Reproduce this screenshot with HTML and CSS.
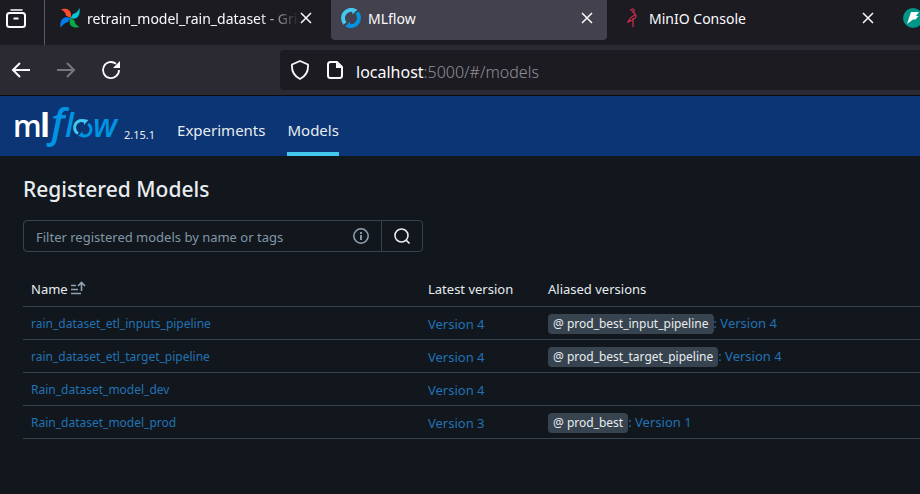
FILE: index.html
```html
<!DOCTYPE html>
<html lang="en">
<head>
<meta charset="utf-8">
<title>MLflow</title>
<link rel="stylesheet" href="styles.css">
</head>
<body>
<div class="tabbar">
  <button class="recent" aria-label="Recent browsing">
    <svg width="22" height="22" viewBox="0 0 22 22" fill="none" stroke="#fbfbfe" stroke-width="2"><path d="M6 2h11" stroke-linecap="round" stroke-width="1.500"/><rect x="2" y="5" width="18" height="14" rx="2.500"/><path d="M8.500 10.500h5"/></svg>
  </button>
  <div class="tabs">
    <div class="tab">
      <svg class="favicon" viewBox="0 0 20 20"><path d="M1 1.500C6-.5 13 2 10.500 10L6 7.500C6 5 4 3 1 1.500Z" fill="#ff4b2b"/><path d="M19.500 0C20.500 6 18 13 10.500 10L13 6C16 5.500 18 3 19.500 0Z" fill="#00c7d4"/><path d="M19.500 19C14 20.500 7 18 10.500 10L14.500 12.500C14.500 15.500 17 17.500 19.500 19Z" fill="#04ab46"/><path d="M.5 19.500C-.5 14 2 7 10.500 10L8 14C5 14.500 2.500 17 .5 19.500Z" fill="#017cee"/></svg>
      <span class="title fade">retrain_model_rain_dataset - Grid</span>
      <button class="close" aria-label="Close tab"><svg width="12" height="12" viewBox="0 0 12 12"><path d="M1 1l10 10M11 1L1 11" stroke="#fbfbfe" stroke-width="1.500"/></svg></button>
    </div>
    <div class="tab active">
      <svg class="favicon" viewBox="0 0 20 20"><path d="M4 15.500A8.300 8.300 0 0 1 13 2.300" fill="none" stroke="#43c9ed" stroke-width="4"/><path d="M11 0l5.500 1.500L11.500 6.500z" fill="#43c9ed"/><path d="M16 4.500A8.300 8.300 0 0 1 7 17.700" fill="none" stroke="#0194e2" stroke-width="4"/><path d="M9 13.500l-5 5 5.500 1.500z" fill="#0194e2"/></svg>
      <span class="title">MLflow</span>
      <button class="close" aria-label="Close tab"><svg width="12" height="12" viewBox="0 0 12 12"><path d="M1 1l10 10M11 1L1 11" stroke="#fbfbfe" stroke-width="1.500"/></svg></button>
    </div>
    <div class="tab">
      <svg class="favicon" viewBox="0 0 20 20" fill="none" stroke="#c72c48" stroke-width="1.300"><path d="M8.500 3C9.500 0 13 1 12 3.500C11 5 14 6 14 8C14 11 10 12 6 14C8 10 10 8 13 7M10 3L13 6M11 10v9"/></svg>
      <span class="title">MinIO Console</span>
      <button class="close" aria-label="Close tab"><svg width="12" height="12" viewBox="0 0 12 12"><path d="M1 1l10 10M11 1L1 11" stroke="#fbfbfe" stroke-width="1.500"/></svg></button>
    </div>
    <div class="tab">
      <svg class="favicon" viewBox="0 0 20 20"><circle cx="10" cy="10" r="10" fill="#009688"/><path d="M8 4h8l-3 4h2.500l-3 3.500H10L4 16z" fill="#fff"/></svg>
    </div>
  </div>
</div>
<div class="toolbar">
  <button aria-label="Back"><svg width="20" height="20" viewBox="0 0 20 20" fill="none" stroke="#fbfbfe" stroke-width="2"><path d="M19 10H2M9 3l-7 7 7 7"/></svg></button>
  <button aria-label="Forward" disabled><svg width="20" height="20" viewBox="0 0 20 20" fill="none" stroke="#77767d" stroke-width="2"><path d="M1 10h17M11 3l7 7-7 7"/></svg></button>
  <button aria-label="Reload"><svg width="20" height="20" viewBox="0 0 20 20" fill="none" stroke="#fbfbfe" stroke-width="1.800"><path d="M18 10A8 8 0 1 1 15 3.800"/><path d="M19 1v7h-7z" fill="#fbfbfe" stroke="none"/></svg></button>
  <div class="urlbar">
    <svg width="20" height="20" viewBox="0 0 20 20" fill="none" stroke="#fbfbfe" stroke-width="1.800"><path d="M10 1L18 4.500C18.500 11 16 16 10 19C4 16 1.500 11 2 4.500Z" stroke-linejoin="round"/></svg>
    <svg width="20" height="20" viewBox="0 0 20 20" fill="none" stroke="#fbfbfe" stroke-width="2"><path d="M12 2H5.500Q3 2 3 4.500v11Q3 18 5.500 18h9Q17 18 17 15.500V7z" stroke-linejoin="round"/><path d="M11 2v6h6z" fill="#fbfbfe" stroke="none"/></svg>
    <span class="url"><b>localhost</b>:5000/#/models</span>
  </div>
</div>
<header class="appbar">
  <a class="brand" href="#/" aria-label="MLflow home">
    <svg class="logo" width="106" height="60" viewBox="0 0 106 60">
      <text y="41"><tspan class="logo-m" x="-1">m</tspan><tspan class="logo-l" x="26">l</tspan><tspan class="logo-f" x="37">f</tspan><tspan class="logo-w" x="51">l</tspan><tspan class="logo-w" x="79">w</tspan></text>
      <path d="M64 37.500A6.500 6.500 0 0 1 71 25.500" fill="none" stroke="#43c9ed" stroke-width="3"/><path d="M69.500 23l5 1-4.500 5z" fill="#43c9ed"/>
      <path d="M74 28A6.500 6.500 0 0 1 67 39" fill="none" stroke="#0194e2" stroke-width="3"/><path d="M68.500 35.500l-4.500 4.500 5 1z" fill="#0194e2"/>
    </svg>
  </a>
  <span class="release">2.15.1</span>
  <nav class="menu">
    <a href="#/experiments">Experiments</a>
    <a class="current" href="#/models">Models</a>
  </nav>
</header>
<main class="content">
  <h1>Registered Models</h1>
  <form class="search">
    <label class="field"><input type="text" aria-label="Filter registered models" placeholder="Filter registered models by name or tags">
      <svg width="16" height="16" viewBox="0 0 16 16" fill="none" stroke="#92a4b3" stroke-width="1.500"><circle cx="8" cy="8" r="7.200"/><path d="M8 7v5M8 4v2" stroke-width="1.800"/></svg></label>
    <button type="button" aria-label="Search"><svg width="16" height="16" viewBox="0 0 16 16" fill="none" stroke="#e8ecf0" stroke-width="1.600"><circle cx="7.500" cy="7.500" r="6.500"/><path d="M12 12l3.500 3.500"/></svg></button>
  </form>
  <table class="models">
    <thead>
      <tr><th class="name">Name <svg width="15" height="14" viewBox="0 0 15 14" fill="none" stroke="#92a4b3" stroke-width="1.600"><path d="M0 4.500h5M0 8.500h7M0 12.500h10M10.500 10V2M7 5l3.500-3.500L14 5"/></svg></th><th class="latest">Latest version</th><th>Aliased versions</th></tr>
    </thead>
    <tbody>
      <tr><td><a class="model" href="#">rain_dataset_etl_inputs_pipeline</a></td><td><a href="#">Version 4</a></td><td><a href="#"><span class="alias">@ prod_best_input_pipeline</span>: Version 4</a></td></tr>
      <tr><td><a class="model" href="#">rain_dataset_etl_target_pipeline</a></td><td><a href="#">Version 4</a></td><td><a href="#"><span class="alias">@ prod_best_target_pipeline</span>: Version 4</a></td></tr>
      <tr><td><a class="model" href="#">Rain_dataset_model_dev</a></td><td><a href="#">Version 4</a></td><td></td></tr>
      <tr><td><a class="model" href="#">Rain_dataset_model_prod</a></td><td><a href="#">Version 3</a></td><td><a href="#"><span class="alias">@ prod_best</span>: Version 1</a></td></tr>
    </tbody>
  </table>
</main>
</body>
</html>
```
FILE: styles.css
```css
* { box-sizing: border-box; }
html { background: #11171c; }
body {
  margin: 0;
  min-height: 100vh;
  overflow: hidden;
  background: #11171d;
  color: #e8ecf0;
  font: 13px/20px "Noto Sans", "Open Sans", sans-serif;
}
button { border: 0; padding: 0; background: none; display: flex; align-items: center; justify-content: center; }
a { color: #2272b4; text-decoration: none; }
svg { flex: none; }

.tabbar { display: flex; height: 45px; background: #1c1b22; }
.recent { width: 45px; padding: 0 12px 8px 0; border-right: 1px solid #5b5b66; flex: none; }
.tabs { display: flex; gap: 5px; padding-left: 5px; flex: 1; min-width: 0; overflow: hidden; }
.tab { display: flex; align-items: center; flex: none; width: 276px; height: 40px; padding: 0 14px 4px 10px; border-radius: 0 0 4px 4px; }
.tab.active { background: #42414d; }
.favicon { width: 20px; height: 20px; margin-right: 7px; }
.title { flex: 1; min-width: 0; padding-top: 2px; color: #fbfbfe; font-size: 14px; white-space: nowrap; overflow: hidden; }
.fade { mask-image: linear-gradient(to right, #000 80%, transparent); }
.close { width: 12px; }

.toolbar { display: flex; align-items: center; height: 51px; padding: 5px 0 5px 11px; gap: 25px; background: #2b2a33; border-bottom: 1px solid #0c0c0d; }
.urlbar { display: flex; align-items: center; flex: 1; height: 40px; margin-left: 134px; padding-left: 10px; gap: 15px; background: #1c1b22; border-radius: 4px 0 0 4px; }
.url { padding-top: 4px; color: #8f8f96; font-size: 16px; font-weight: 300; margin-left: -4px; }
.url b { color: #fbfbfe; font-weight: 400; }

.appbar { display: flex; height: 60px; padding-left: 14px; background: #0b3574; }
.logo text { font-family: "Open Sans", sans-serif; }
.logo-m { fill: #fff; font-size: 30px; font-weight: 600; }
.logo-l { fill: #fff; font-size: 33px; font-weight: 700; }
.logo-f, .logo-w { fill: #0194e2; font-style: italic; font-weight: 600; }
.logo-f { font-size: 40px; }
.logo-w { font-size: 32px; }
.release { padding: 29px 0 0 4px; font-size: 11px; }
.menu { display: flex; gap: 22px; margin-left: 22px; font-size: 15px; }
.menu a { color: #e8ecf0; padding-top: 24px; }
.menu .current { border-bottom: 4px solid #43c9ed; }

.content { padding: 19px 0 0 23px; }
h1 { margin: 0; font-size: 21px; line-height: 28px; font-weight: 500; }
.search { display: flex; width: 400px; height: 32px; margin-top: 17px; border: 1px solid #37444f; border-radius: 4px; }
.field { display: flex; align-items: center; flex: 1; padding: 0 12px; }
.field input { flex: 1; min-width: 0; border: 0; padding: 1px 0 0; background: none; outline: 0; font: inherit; color: #e8ecf0; }
.field input::placeholder { color: #8396a5; opacity: 1; }
.search button { width: 41px; border-left: 1px solid #37444f; }
.models { width: 100%; margin-top: 21px; border-collapse: collapse; table-layout: fixed; }
.models th, .models td { height: 33px; padding: 0 8px; border-bottom: 1px solid #37444f; text-align: left; font-weight: 400; white-space: nowrap; }
.models td { padding-top: 2px; }
.models th svg { vertical-align: -1px; }
.name { width: 397px; }
.latest { width: 120px; }
.model { font-size: 12px; }
.alias { display: inline-block; padding: 0 5px; border-radius: 4px; background: #37444f; color: #e8ecf0; font-size: 12px; }
```
